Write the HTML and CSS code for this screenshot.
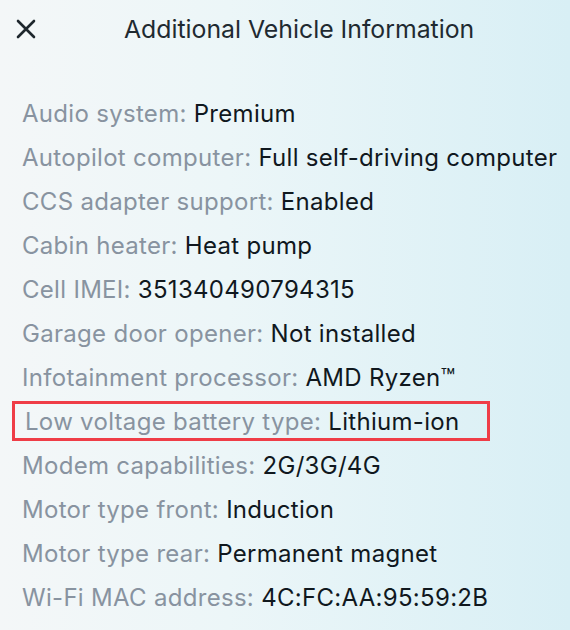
FILE: index.html
```html
<!DOCTYPE html>
<html>
<head>
<meta charset="utf-8">
<link rel="stylesheet" href="styles.css">
</head>
<body>
<div class="screen">
  <header class="header">
    <span class="close" aria-label="Close">
      <svg width="20" height="20" viewBox="0 0 20 20"><path d="M2 2 L18 18 M18 2 L2 18" stroke="#1e272d" stroke-width="2.6" stroke-linecap="round" fill="none"/></svg>
    </span>
    <h1 class="title">Additional Vehicle Information</h1>
  </header>
  <ul class="list">
    <li class="row"><span class="label">Audio system: </span><span class="value">Premium</span></li>
    <li class="row"><span class="label">Autopilot computer: </span><span class="value">Full self-driving computer</span></li>
    <li class="row"><span class="label">CCS adapter support: </span><span class="value">Enabled</span></li>
    <li class="row"><span class="label">Cabin heater: </span><span class="value">Heat pump</span></li>
    <li class="row"><span class="label">Cell IMEI: </span><span class="value">351340490794315</span></li>
    <li class="row"><span class="label">Garage door opener: </span><span class="value">Not installed</span></li>
    <li class="row"><span class="label">Infotainment processor: </span><span class="value">AMD Ryzen™</span></li>
    <li class="row"><span class="boxed"><span class="label">Low voltage battery type: </span><span class="value">Lithium-ion</span></span></li>
    <li class="row"><span class="label">Modem capabilities: </span><span class="value">2G/3G/4G</span></li>
    <li class="row"><span class="label">Motor type front: </span><span class="value">Induction</span></li>
    <li class="row"><span class="label">Motor type rear: </span><span class="value">Permanent magnet</span></li>
    <li class="row"><span class="label">Wi-Fi MAC address: </span><span class="value">4C:FC:AA:95:59:2B</span></li>
  </ul>
</div>
</body>
</html>
```
FILE: styles.css
```css
html, body {
  margin: 0;
  padding: 0;
}
body {
  width: 570px;
  height: 630px;
  overflow: hidden;
  font-family: Inter, "Noto Sans", sans-serif;
}
.screen {
  width: 570px;
  height: 630px;
  box-sizing: border-box;
  background: linear-gradient(90deg, #f4f7f8 0%, #ecf6f8 40%, #d8eff5 100%);
}
.header {
  display: flex;
  align-items: center;
  height: 58px;
  padding-left: 16px;
}
.close {
  display: flex;
  width: 20px;
  height: 20px;
}
.title {
  margin: 0 0 0 88px;
  font-size: 24.8px;
  font-weight: 400;
  color: #1f2a31;
}
.list {
  list-style: none;
  margin: 33px 0 0;
  padding: 0 0 0 22px;
}
.row {
  height: 44px;
  display: flex;
  align-items: center;
  font-size: 24px;
  letter-spacing: 0.3px;
  white-space: pre;
}
.label {
  color: #8893a0;
}
.value {
  color: #10181e;
}
.boxed {
  display: flex;
  align-items: center;
  height: 34px;
  margin-left: -10px;
  padding: 0 28px 0 10px;
  border: 3px solid #ef3d47;
  white-space: pre;
}
```
